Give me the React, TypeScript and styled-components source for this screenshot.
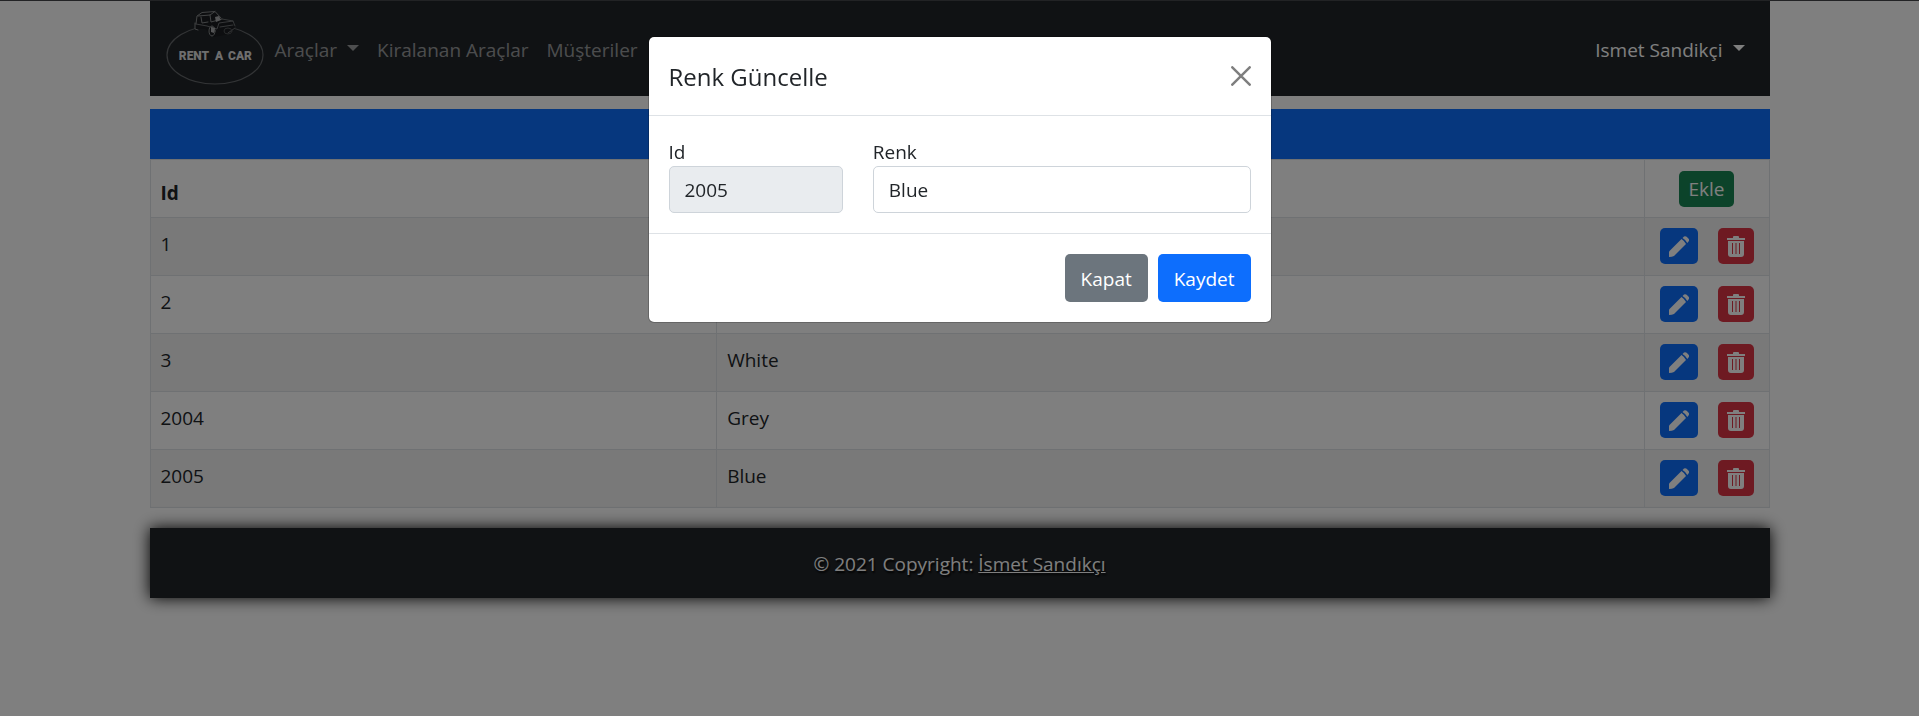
import React from "react";
import styled, { createGlobalStyle, css } from "styled-components";

const GlobalStyle = createGlobalStyle`
  *, *::before, *::after { box-sizing: border-box; }
  body {
    margin: 0;
    background: #fff;
    color: #212529;
    font-family: "Open Sans", "Noto Sans", sans-serif;
    font-size: 19px;
    line-height: 30px;
  }
  button, input { font: inherit; }
`;

const Page = styled.div`
  min-height: 100vh;
  padding-bottom: 30px;
`;

const TopLine = styled.div`
  height: 1px;
  background: #45464a;
`;

const Container = styled.div`
  width: calc(100% - 30px);
  max-width: 1620px;
  margin: 0 auto;
`;

const Navbar = styled.nav`
  display: flex;
  align-items: center;
  height: 95px;
  padding: 0 25px 0 15px;
  background: #212529;
`;

const Brand = styled.a`
  display: block;
  height: 80px;
  margin-right: 10px;
  svg { display: block; }
`;

const NavLink = styled.a<{ $active?: boolean }>`
  display: flex;
  align-items: center;
  gap: 10px;
  margin-right: 18px;
  padding-top: 2px;
  color: ${(p) => (p.$active ? "#fff" : "rgba(255, 255, 255, 0.55)")};
  text-decoration: none;
  white-space: nowrap;
`;

const UserMenu = styled.div`
  margin-left: auto;
  ${NavLink} { margin-right: 0; }
`;

const Caret = styled.span`
  margin-bottom: 4px;
  border-top: 6px solid;
  border-left: 6px solid transparent;
  border-right: 6px solid transparent;
`;

const Banner = styled.div`
  height: 50px;
  margin-top: 13px;
  background: #0d6efd;
`;

const Table = styled.table`
  width: 100%;
  border-collapse: collapse;
  table-layout: fixed;
  margin-bottom: 20px;
`;

const cell = css`
  height: 58px;
  padding: 10px;
  border: 1px solid #dee2e6;
  text-align: left;
`;

const HeadCell = styled.th<{ $width?: string }>`
  ${cell}
  width: ${(p) => p.$width ?? "auto"};
  line-height: 28px;
  vertical-align: bottom;
`;

const Cell = styled.td`
  ${cell}
  line-height: 32px;
  vertical-align: top;
`;

const Row = styled.tr`
  &:nth-child(odd) { background: #f2f2f2; }
`;

const Actions = styled.div`
  display: flex;
  justify-content: center;
  gap: 20px;
`;

const colors = {
  primary: "#0d6efd",
  secondary: "#6c757d",
  success: "#198754",
  danger: "#dc3545",
};

const Button = styled.button<{ $tone: keyof typeof colors; $small?: boolean }>`
  display: flex;
  align-items: center;
  justify-content: center;
  height: ${(p) => (p.$small ? 36 : 48)}px;
  padding: ${(p) => (p.$small ? "0 9px" : "2px 16px 0")};
  border: 0;
  border-radius: 5px;
  background: ${(p) => colors[p.$tone]};
  color: #fff;
  font-weight: 400;
  cursor: pointer;
`;

const Footer = styled.footer`
  padding: 21px 20px 19px;
  background: #212529;
  box-shadow: 0 0 15px #000;
  color: #fff;
  text-align: center;
  text-shadow: 1px 2px 2px #000;
  a { color: #fff; }
`;

const Backdrop = styled.div`
  position: fixed;
  inset: 0;
  padding: 36px 15px;
  background: rgba(0, 0, 0, 0.5);
`;

const Modal = styled.form`
  max-width: 624px;
  margin: 0 auto;
  border: 1px solid rgba(0, 0, 0, 0.2);
  border-radius: 6px;
  background: #fff;
  background-clip: padding-box;
`;

const ModalHeader = styled.header`
  display: flex;
  align-items: center;
  justify-content: space-between;
  padding: 20px;
  border-bottom: 1px solid #dee2e6;
`;

const ModalTitle = styled.h5`
  margin: 0;
  padding-top: 2px;
  font-size: 24px;
  font-weight: 500;
  line-height: 36px;
`;

const CloseButton = styled.button`
  display: flex;
  padding: 0;
  border: 0;
  background: none;
  color: #000;
  opacity: 0.5;
  cursor: pointer;
`;

const ModalBody = styled.div`
  display: grid;
  grid-template-columns: minmax(0, 6fr) minmax(0, 13fr);
  gap: 30px;
  padding: 22px 20px 20px;
`;

const Field = styled.label`
  display: flex;
  flex-direction: column;
  line-height: 28px;
`;

const Input = styled.input`
  width: 100%;
  height: 47px;
  padding: 0 15px;
  border: 1px solid #ced4da;
  border-radius: 5px;
  background: #fff;
  color: #212529;
  &:read-only { background: #e9ecef; }
`;

const ModalFooter = styled.footer`
  display: flex;
  justify-content: flex-end;
  gap: 10px;
  padding: 20px;
  border-top: 1px solid #dee2e6;
`;

const Logo = () => (
  <svg width="100" height="80" viewBox="0 0 100 80" role="img" aria-label="Rent a Car">
    <ellipse cx="50" cy="46" rx="48" ry="29" fill="none" stroke="#66696c" strokeWidth="1.2" />
    <path d="M30 20L32 7L37 3L50 2L56 9L68 12L71 18L66 25L49 28L40 20Z" fill="#1b1d20" />
    <g fill="none" stroke="#85888a" strokeWidth="1" strokeLinecap="round" strokeLinejoin="round">
      <path d="M31 15L32 7L37 3.500L50 2.500L56 9M33 7L45 6L50 2.500M45 6L46 13L57 10M36 8L37 14L43 13" />
      <path d="M31 15L42 17L52 20L54 14L68 12L70 17M57 10L68 12M55 18L68 16M63 24L70 19" stroke="#6c6f72" />
      <ellipse cx="47" cy="22" rx="3" ry="5" />
      <ellipse cx="63" cy="22" rx="4" ry="3" stroke="#505356" />
      <path d="M30 14v6l3 1" />
    </g>
    <path d="M50 8l4-1 2 4-5 2zM46 18l4 1-1 5-3-1z" fill="#a8aaac" />
    <g fontFamily="Roboto, 'Liberation Sans', sans-serif" fontWeight="900" fontSize="12" fill="#ddd" textAnchor="middle">
      <text x="29" y="51">RENT</text>
      <text x="54" y="51">A</text>
      <text x="75" y="51">CAR</text>
    </g>
  </svg>
);

const PencilIcon = () => (
  <svg width="20" height="21" viewBox="0 0 20 21" aria-hidden="true">
    <path fill="#fff" d="M0 21v-5.500L12.500 3q2.500 1.500 4.500 5L5 20q-2 1-5 1z" />
    <path fill="#fff" d="M13.500 2l1.500-1.400q1.300-1 2.700.2l1.900 2q1 1.200.1 2.500L18.300 7q-2-3.600-4.800-5z" />
  </svg>
);

const TrashIcon = () => (
  <svg width="18" height="21" viewBox="0 0 18 21" aria-hidden="true">
    <path fill="#fff" d="M0 2h6V1q0-1 1-1h4q1 0 1 1v1h6v2H0z" />
    <path fill="#fff" fillRule="evenodd" d="M1 5h16v13q0 3-3 3H4q-3 0-3-3zM5 7v11h1V7zM8.500 7v11h1V7zM12 7v11h1V7z" />
  </svg>
);

const rows = [
  { id: 1, name: "Black" },
  { id: 2, name: "Red" },
  { id: 3, name: "White" },
  { id: 2004, name: "Grey" },
  { id: 2005, name: "Blue" },
];

export default function App() {
  return (
    <Page>
      <GlobalStyle />
      <TopLine />
      <Container>
        <Navbar>
          <Brand href="#"><Logo /></Brand>
          <NavLink href="#">Araçlar <Caret /></NavLink>
          <NavLink href="#">Kiralanan Araçlar</NavLink>
          <NavLink href="#">Müşteriler</NavLink>
          <UserMenu>
            <NavLink href="#" $active>Ismet Sandikçi <Caret /></NavLink>
          </UserMenu>
        </Navbar>
        <Banner />
        <Table>
          <thead>
            <tr>
              <HeadCell $width="35%">Id</HeadCell>
              <HeadCell>Renk</HeadCell>
              <HeadCell $width="125px">
                <Actions><Button type="button" $tone="success" $small>Ekle</Button></Actions>
              </HeadCell>
            </tr>
          </thead>
          <tbody>
            {rows.map((r) => (
              <Row key={r.id}>
                <Cell>{r.id}</Cell>
                <Cell>{r.name}</Cell>
                <Cell>
                  <Actions>
                    <Button type="button" $tone="primary" $small aria-label="Güncelle"><PencilIcon /></Button>
                    <Button type="button" $tone="danger" $small aria-label="Sil"><TrashIcon /></Button>
                  </Actions>
                </Cell>
              </Row>
            ))}
          </tbody>
        </Table>
        <Footer>© 2021 Copyright: <a href="#">İsmet Sandıkçı</a></Footer>
      </Container>
      <Backdrop>
        <Modal role="dialog" aria-modal="true" aria-labelledby="modal-title">
          <ModalHeader>
            <ModalTitle id="modal-title">Renk Güncelle</ModalTitle>
            <CloseButton type="button" aria-label="Kapat">
              <svg width="20" height="20" viewBox="0 0 20 20"><path d="M1.300 1.300l17.400 17.400M18.700 1.300L1.300 18.700" stroke="currentColor" strokeWidth="2.500" strokeLinecap="round" /></svg>
            </CloseButton>
          </ModalHeader>
          <ModalBody>
            <Field>Id<Input defaultValue="2005" readOnly /></Field>
            <Field>Renk<Input defaultValue="Blue" /></Field>
          </ModalBody>
          <ModalFooter>
            <Button type="button" $tone="secondary">Kapat</Button>
            <Button type="submit" $tone="primary">Kaydet</Button>
          </ModalFooter>
        </Modal>
      </Backdrop>
    </Page>
  );
}
